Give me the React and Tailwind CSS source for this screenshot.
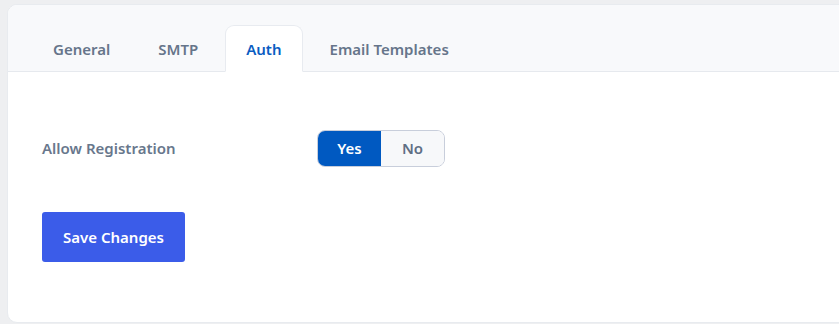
export default function App() {
  const tabs = ['General', 'SMTP', 'Auth', 'Email Templates'];
  const active = 'Auth';

  return (
    <div className="h-[324px] w-[839px] overflow-hidden bg-[#eeeff1] pt-[4px] pl-[7px]"
         style={{ fontFamily: '"Noto Sans", "Open Sans", sans-serif' }}>
      <div className="w-[860px] h-[319px] bg-white rounded-[10px] border border-[#e8ebef] overflow-hidden">
        <div className="h-[67px] bg-[#f8f9fb] border-b border-[#e6e9ee] flex items-end gap-[6px] pl-[24px]">
          {tabs.map(t => (
            <div key={t}
                 className={
                   t === active
                     ? 'h-[47px] -mb-px px-[20px] pt-[2px] flex items-center bg-white border border-[#e8ebf0] border-b-white rounded-t-[9px] text-[15px] font-semibold text-[#0a5cc2]'
                     : 'h-[47px] -mb-px px-[20px] pt-[2px] flex items-center border border-transparent text-[15px] font-semibold text-[#66758a]'
                 }>
              {t}
            </div>
          ))}
        </div>

        <div className="pl-[34px] pt-[58px]">
          <div className="flex items-center">
            <div className="w-[275px] text-[15px] font-semibold text-[#68778c]">Allow Registration</div>
            <div className="flex h-[37px] rounded-[8px] border border-[#c8cedb] overflow-hidden">
              <div className="w-[63px] flex items-center justify-center bg-[#0059c1] text-white text-[15px] font-semibold">Yes</div>
              <div className="w-[63px] flex items-center justify-center bg-[#f7f8fa] text-[#5f6f84] text-[15px] font-semibold">No</div>
            </div>
          </div>

          <button className="mt-[45px] w-[143px] h-[50px] rounded-[3px] bg-[#3b5ce9] text-white text-[15px] font-semibold">
            Save Changes
          </button>
        </div>
      </div>
    </div>
  );
}
